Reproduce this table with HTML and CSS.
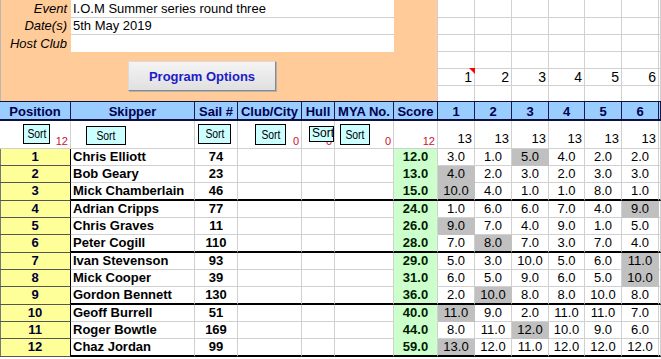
FILE: index.html
```html
<!DOCTYPE html>
<html>
<head>
<meta charset="utf-8">
<title>Results</title>
<link rel="stylesheet" href="styles.css">
</head>
<body>
<div class="sheet">
  <div class="top">
    <div class="info">
      <div class="field f1"><span class="label">Event</span><span class="value">I.O.M Summer series round three</span></div>
      <div class="field f2"><span class="label">Date(s)</span><span class="value">5th May 2019</span></div>
      <div class="field f3"><span class="label">Host Club</span><span class="value"></span></div>
      <button class="program">Program Options</button>
    </div>
    <div class="race-top">
      <div></div><div></div><div></div><div></div><div></div><div></div><div></div>
      <div></div><div></div><div></div><div></div><div></div><div></div><div></div>
      <div></div><div></div><div></div><div></div><div></div><div></div><div></div>
      <div></div><div></div><div></div><div></div><div></div><div></div><div></div>
      <div class="num comment">1</div><div class="num">2</div><div class="num">3</div><div class="num">4</div><div class="num">5</div><div class="num">6</div><div></div>
      <div class="lr"></div><div class="lr"></div><div class="lr"></div><div class="lr"></div><div class="lr"></div><div class="lr"></div><div class="lr"></div>
    </div>
  </div>

  <div class="row head">
    <div>Position</div><div>Skipper</div><div>Sail #</div><div>Club/City</div><div>Hull</div><div>MYA No.</div><div>Score</div>
    <div>1</div><div>2</div><div>3</div><div>4</div><div>5</div><div>6</div><div></div>
  </div>

  <div class="row sorts">
    <div><span class="cnt">12</span><span class="sbtn b-pos"><span>Sort</span></span></div>
    <div><span class="sbtn b-skip"><span>Sort</span></span></div>
    <div><span class="sbtn b-sail"><span>Sort</span></span></div>
    <div><span class="cnt">0</span><span class="sbtn b-club"><span>Sort</span></span></div>
    <div><span class="cnt">0</span><span class="sbtn b-hull"><span>Sort</span></span></div>
    <div><span class="cnt">0</span><span class="sbtn b-mya"><span>Sort</span></span></div>
    <div><span class="cnt">12</span></div>
    <div><span class="r13">13</span></div>
    <div><span class="r13">13</span></div>
    <div><span class="r13">13</span></div>
    <div><span class="r13">13</span></div>
    <div><span class="r13">13</span></div>
    <div><span class="r13">13</span></div>
    <div></div>
  </div>

  <div class="row data"><div class="pos">1</div><div class="skip">Chris Elliott</div><div class="sail">74</div><div></div><div></div><div></div><div class="score">12.0</div><div>3.0</div><div>1.0</div><div class="g">5.0</div><div>4.0</div><div>2.0</div><div>2.0</div><div></div></div>
  <div class="row data"><div class="pos">2</div><div class="skip">Bob Geary</div><div class="sail">23</div><div></div><div></div><div></div><div class="score">13.0</div><div class="g">4.0</div><div>2.0</div><div>3.0</div><div>2.0</div><div>3.0</div><div>3.0</div><div></div></div>
  <div class="row data thick"><div class="pos">3</div><div class="skip">Mick Chamberlain</div><div class="sail">46</div><div></div><div></div><div></div><div class="score">15.0</div><div class="g">10.0</div><div>4.0</div><div>1.0</div><div>1.0</div><div>8.0</div><div>1.0</div><div></div></div>
  <div class="row data"><div class="pos">4</div><div class="skip">Adrian Cripps</div><div class="sail">77</div><div></div><div></div><div></div><div class="score">24.0</div><div>1.0</div><div>6.0</div><div>6.0</div><div>7.0</div><div>4.0</div><div class="g">9.0</div><div></div></div>
  <div class="row data"><div class="pos">5</div><div class="skip">Chris Graves</div><div class="sail">11</div><div></div><div></div><div></div><div class="score">26.0</div><div class="g">9.0</div><div>7.0</div><div>4.0</div><div>9.0</div><div>1.0</div><div>5.0</div><div></div></div>
  <div class="row data thick"><div class="pos">6</div><div class="skip">Peter Cogill</div><div class="sail">110</div><div></div><div></div><div></div><div class="score">28.0</div><div>7.0</div><div class="g">8.0</div><div>7.0</div><div>3.0</div><div>7.0</div><div>4.0</div><div></div></div>
  <div class="row data"><div class="pos">7</div><div class="skip">Ivan Stevenson</div><div class="sail">93</div><div></div><div></div><div></div><div class="score">29.0</div><div>5.0</div><div>3.0</div><div>10.0</div><div>5.0</div><div>6.0</div><div class="g">11.0</div><div></div></div>
  <div class="row data"><div class="pos">8</div><div class="skip">Mick Cooper</div><div class="sail">39</div><div></div><div></div><div></div><div class="score">31.0</div><div>6.0</div><div>5.0</div><div>9.0</div><div>6.0</div><div>5.0</div><div class="g">10.0</div><div></div></div>
  <div class="row data thick"><div class="pos">9</div><div class="skip">Gordon Bennett</div><div class="sail">130</div><div></div><div></div><div></div><div class="score">36.0</div><div>2.0</div><div class="g">10.0</div><div>8.0</div><div>8.0</div><div>10.0</div><div>8.0</div><div></div></div>
  <div class="row data"><div class="pos">10</div><div class="skip">Geoff Burrell</div><div class="sail">51</div><div></div><div></div><div></div><div class="score">40.0</div><div class="g">11.0</div><div>9.0</div><div>2.0</div><div>11.0</div><div>11.0</div><div>7.0</div><div></div></div>
  <div class="row data"><div class="pos">11</div><div class="skip">Roger Bowtle</div><div class="sail">169</div><div></div><div></div><div></div><div class="score">44.0</div><div>8.0</div><div>11.0</div><div class="g">12.0</div><div>10.0</div><div>9.0</div><div>6.0</div><div></div></div>
  <div class="row data thick"><div class="pos">12</div><div class="skip">Chaz Jordan</div><div class="sail">99</div><div></div><div></div><div></div><div class="score">59.0</div><div class="g">13.0</div><div>12.0</div><div>11.0</div><div>12.0</div><div>12.0</div><div>12.0</div><div></div></div>
</div>
</body>
</html>
```

FILE: styles.css
```css
* { box-sizing: border-box; margin: 0; padding: 0; }
body {
  margin: 0;
  background: #fff;
  font-family: "Liberation Sans", Arial, sans-serif;
  font-size: 13px;
  color: #000;
}
.sheet { width: 661px; }

/* top block */
.top { display: flex; height: 101px; }
.info {
  width: 438px;
  background: #ffcc99;
  border-left: 1px solid #b8b8b8;
  border-right: 1px solid #d0d0d0;
}
.field { display: grid; grid-template-columns: 70px 323px; white-space: nowrap; }
.label { text-align: right; padding-right: 4px; font-style: italic; }
.value { background: #fff; padding-left: 2px; }
.f1 { height: 18px; line-height: 17px; }
.f1 .value { border-bottom: 1px solid #d0d0d0; }
.f2 { height: 17px; line-height: 16px; }
.f2 .value { border-bottom: 1px solid #d0d0d0; }
.f3 { height: 17px; line-height: 17px; }
.program {
  display: block;
  margin: 9px 0 0 127px;
  width: 148px;
  height: 30px;
  font: bold 13px "Liberation Sans", Arial, sans-serif;
  color: #1c1cc8;
  background: linear-gradient(#f4f4f4, #e0e0e0);
  border: 1px solid;
  border-color: #dadada #8a8a8a #8a8a8a #dadada;
  box-shadow: 1px 1px 0 #b0b0b0;
}
.race-top {
  flex: 1;
  display: grid;
  grid-template-columns: 37px 37px 37px 36px 37px 37px 1fr;
  grid-template-rows: 18px 17px 17px 17px 17px 15px;
}
.race-top > div { border-right: 1px solid #d0d0d0; border-bottom: 1px solid #d0d0d0; }
.race-top > .lr { border-bottom: none; }
.num { text-align: right; padding-right: 2px; font-size: 14px; line-height: 16px; position: relative; }
.comment::after {
  content: "";
  position: absolute;
  top: -1px;
  right: -1px;
  border-style: solid;
  border-width: 0 6px 6px 0;
  border-color: transparent #f00 transparent transparent;
}

/* table rows */
.row {
  display: grid;
  grid-template-columns: 71px 124px 43px 64px 33px 59px 44px 37px 37px 37px 36px 37px 37px 1fr;
}
.head {
  height: 20px;
  background: #99ccff;
  border-top: 1px solid #101040;
  border-bottom: 2px solid #101040;
  font-weight: bold;
  color: #000050;
  text-align: center;
  line-height: 16px;
  white-space: nowrap;
}
.head > div { border-right: 1px solid #1a1a4a; padding-top: 2px; overflow: hidden; }

.sorts { height: 28px; border-bottom: 1px solid #d0d0d0; }
.sorts > div { border-right: 1px solid #d0d0d0; display: grid; overflow: hidden; }
.sorts > div > * { grid-area: 1 / 1; }
.sbtn {
  align-self: start;
  justify-self: start;
  display: flex;
  align-items: center;
  justify-content: center;
  background: #ccffff;
  border: 1px solid #000;
  overflow: hidden;
  white-space: nowrap;
}
.sbtn span { display: inline-block; font-size: 13px; line-height: 14px; transform: scaleX(0.8); }
.b-pos { margin: 3px 0 0 23px; width: 27px; height: 20px; }
.b-skip { margin: 5px 0 0 15px; width: 40px; height: 19px; }
.b-sail { margin: 3px 0 0 3px; width: 33px; height: 20px; }
.b-club { margin: 3px 0 0 17px; width: 31px; height: 21px; }
.b-hull { margin: 5px 0 0 7px; width: 25px; height: 16px; justify-content: flex-start; align-items: flex-start; padding-left: 2px; }
.b-hull span { transform: none; font-size: 12px; line-height: 13px; }
.b-mya { margin: 3px 0 0 5px; width: 30px; height: 21px; }
.cnt {
  align-self: end;
  justify-self: end;
  color: #cc1030;
  font-size: 11px;
  line-height: 12px;
  padding: 0 2px 1px 0;
}
.r13 {
  align-self: end;
  justify-self: end;
  font-size: 13px;
  line-height: 14px;
  padding: 0 2px 2px 0;
}

.data { text-align: center; white-space: nowrap; }
.data > div {
  height: 17px;
  line-height: 16px;
  border-right: 1px solid #d0d0d0;
  border-bottom: 1px solid #d0d0d0;
  overflow: hidden;
}
.data.thick > div { height: 18px; border-bottom: 2px solid #000; }
.data > .pos,
.data.thick > .pos {
  background: #ffff99;
  border-right-color: #000;
  border-bottom: 1px solid #555;
  box-shadow: inset 1px 0 #777;
  font-weight: bold;
  color: #000033;
}
.data > .skip { text-align: left; padding-left: 2px; font-weight: bold; }
.data > .sail { font-weight: bold; }
.data > .score { background: #ccffcc; border-bottom-color: #ccffcc; font-weight: bold; color: #001a00; }
.data.thick > .score { border-bottom-color: #000; }
.data > .g { background: #c0c0c0; border-bottom-color: #c0c0c0; border-right-color: #c0c0c0; }
.data.thick > .g { border-bottom-color: #000; }
```
